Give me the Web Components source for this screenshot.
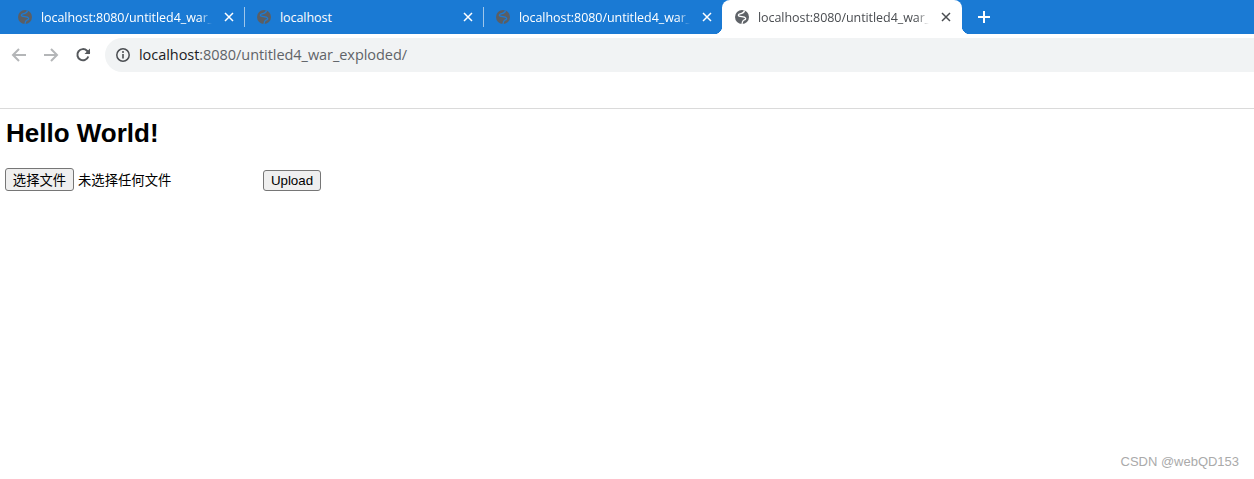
<!DOCTYPE html>
<html lang="zh">
<head>
<meta charset="utf-8">
<title>localhost</title>
<style>
html,body{margin:0;padding:0;background:#fff;height:479px;overflow:hidden}
body{display:flex;flex-direction:column;position:relative;font-family:"Liberation Sans",Arial,sans-serif}
</style>
</head>
<body>
<tab-strip>
  <browser-tab label="localhost:8080/untitled4_war_"></browser-tab>
  <browser-tab label="localhost" plain></browser-tab>
  <browser-tab label="localhost:8080/untitled4_war_"></browser-tab>
  <browser-tab label="localhost:8080/untitled4_war_" active></browser-tab>
</tab-strip>
<nav-bar host="localhost" rest=":8080/untitled4_war_exploded/"></nav-bar>
<bookmark-bar></bookmark-bar>
<upload-page></upload-page>
<water-mark>CSDN @webQD153</water-mark>

<script>
const GLOBE = `<svg viewBox="0 0 16 16" width="16" height="16" aria-hidden="true"><mask id="g" maskUnits="userSpaceOnUse" x="0" y="0" width="16" height="16"><circle cx="8" cy="8" r="7" fill="#fff"/><path d="M10.500 1.500C10 4 8 4.500 6 4.800 4.300 5.100 3.800 6.600 5.200 7.200 7 8 10.500 7.400 11.500 9 12.300 10.300 10.300 10.800 9.300 11.500 8.500 12.100 8.200 13.500 8 15" fill="none" stroke="#000" stroke-width="1.300"/></mask><rect width="16" height="16" fill="currentColor" mask="url(#g)"/></svg>`;

class TabStrip extends HTMLElement{
  constructor(){super();this.attachShadow({mode:'open'}).innerHTML=`
  <style>
  :host{display:flex;align-items:flex-end;height:34px;background:#1a7ad4;padding-left:6px;box-sizing:border-box;flex:none}
  .plus{width:43px;height:34px;display:flex;align-items:center;justify-content:center;color:#fff}
  </style>
  <slot></slot>
  <div class="plus"><svg width="14" height="14" viewBox="0 0 14 14"><path d="M7 1v12M1 7h12" stroke="currentColor" stroke-width="2" fill="none"/></svg></div>`;}
}
class BrowserTab extends HTMLElement{
  connectedCallback(){
    if(this.shadowRoot)return;
    this.attachShadow({mode:'open'}).innerHTML=`
    <style>
    :host{display:flex;align-items:center;width:239px;height:34px;box-sizing:border-box;padding:0 8px 0 11px;position:relative;color:#fff;font:12.500px/18px "Open Sans","Noto Sans",sans-serif;letter-spacing:-.06px}
    :host([active]){background:#fff;color:#4a4d51;border-radius:8px 8px 0 0;width:240px;padding-left:12px;margin-left:-1px}
    :host(:not([active]))::after{content:"";position:absolute;right:0;top:7px;height:20px;width:1px;background:#9fc6ea}
    .ic{flex:none;width:16px;height:16px;color:#5a5e64;margin-right:8px}
    :host([active]) .ic{color:#5f6368}
    .t{flex:1;min-width:0;padding-top:1px;white-space:nowrap;-webkit-mask-image:linear-gradient(90deg,#000 calc(100% - 12px),transparent 100%);mask-image:linear-gradient(90deg,#000 calc(100% - 12px),transparent 100%)}
    :host([plain]) .t{-webkit-mask-image:none;mask-image:none}
    .x{flex:none;width:16px;height:16px;margin-left:9px;display:flex;align-items:center;justify-content:center}
    .cap{display:none;position:absolute;bottom:0;width:8px;height:8px;background:radial-gradient(circle at var(--c),#1a7ad4 8px,#fff 8.500px)}
    :host([active]) .cap{display:block}
    .l{left:-8px;--c:0 0}.r{right:-8px;--c:100% 0}
    </style>
    <span class="ic">${GLOBE}</span>
    <span class="t">${this.getAttribute('label')}</span>
    <span class="x"><svg width="10" height="10" viewBox="0 0 10 10"><path d="M1 1l8 8M9 1l-8 8" stroke="currentColor" stroke-width="1.500" fill="none"/></svg></span>
    <i class="cap l"></i><i class="cap r"></i>`;
  }
}
class NavBar extends HTMLElement{
  connectedCallback(){
    if(this.shadowRoot)return;
    this.attachShadow({mode:'open'}).innerHTML=`
    <style>
    :host{display:flex;align-items:center;height:42px;box-sizing:border-box;padding:4px 0 4px 7px;background:#fff;flex:none}
    .b{flex:none;width:24px;height:24px;margin-right:8px;display:flex;align-items:center;justify-content:center;color:#b4b6b8}
    .b.on{color:#55585c;margin-right:10px}
    .omni{flex:1;height:34px;background:#f1f3f4;border-radius:17px 0 0 17px;display:flex;align-items:center;padding-left:10px;font:14.500px/20px "Open Sans","Noto Sans",sans-serif;letter-spacing:-.05px;color:#5f6368}
    .omni svg{flex:none;margin-right:8px;color:#4a4d51}
    .h{color:#202124}
    </style>
    <div class="b"><svg width="16" height="16" viewBox="0 0 16 16"><path d="M15 8H2M8 2L2 8l6 6" stroke="currentColor" stroke-width="2" fill="none"/></svg></div>
    <div class="b"><svg width="16" height="16" viewBox="0 0 16 16"><path d="M1 8h13M8 2l6 6-6 6" stroke="currentColor" stroke-width="2" fill="none"/></svg></div>
    <div class="b on"><svg width="16" height="16" viewBox="0 0 16 16"><path d="M13.300 9.500A5.600 5.600 0 1 1 12 3.800L14.500 6.500" stroke="currentColor" stroke-width="2" fill="none"/><path d="M15 1.500V7H9.500z" fill="currentColor"/></svg></div>
    <div class="omni"><svg width="16" height="16" viewBox="0 0 16 16"><circle cx="8" cy="8" r="6.200" stroke="currentColor" stroke-width="1.500" fill="none"/><path d="M8 7v4.500" stroke="currentColor" stroke-width="1.600"/><circle cx="8" cy="4.900" r="1" fill="currentColor"/></svg><span><span class="h">${this.getAttribute('host')}</span>${this.getAttribute('rest')}</span></div>`;
  }
}
class BookmarkBar extends HTMLElement{
  constructor(){super();this.attachShadow({mode:'open'}).innerHTML=`<style>:host{display:block;height:33px;box-sizing:border-box;border-bottom:1px solid #dadada;flex:none}</style>`;}
}
class FilePicker extends HTMLElement{
  constructor(){super();this.attachShadow({mode:'open'}).innerHTML=`
  <style>
  :host{display:inline-flex;align-items:center;width:258px;flex:none;font:13.333px "Noto Sans CJK SC",sans-serif}
  button{font:inherit;height:23px;width:69px;padding:0;margin-right:4px;background:#efefef;color:#000;border:1px solid #767676;border-radius:3px;box-sizing:border-box}
  </style>
  <button type="button">选择文件</button><span>未选择任何文件</span>`;}
}
class UploadPage extends HTMLElement{
  constructor(){super();this.attachShadow({mode:'open'}).innerHTML=`
  <style>
  :host{display:block;padding:0 5px;color:#000;font-family:"Liberation Sans",Arial,sans-serif}
  h1{margin:9px 0 0 1px;font-size:26px;line-height:30px;font-weight:700}
  .row{display:flex;align-items:flex-end;margin-top:20px}
  .up{height:21px;width:58px;padding:0;background:#efefef;color:#000;border:1px solid #767676;border-radius:3px;box-sizing:border-box;font:13.333px "Liberation Sans",Arial,sans-serif}
  </style>
  <h1>Hello World!</h1>
  <div class="row"><file-picker></file-picker><button class="up" type="button">Upload</button></div>`;}
}
class WaterMark extends HTMLElement{
  constructor(){super();this.attachShadow({mode:'open'}).innerHTML=`
  <style>:host{position:absolute;right:15px;top:454px;font:13px/16px "Liberation Sans",Arial,sans-serif;letter-spacing:-.02px;color:#aaa}</style><slot></slot>`;}
}
customElements.define('tab-strip',TabStrip);
customElements.define('browser-tab',BrowserTab);
customElements.define('nav-bar',NavBar);
customElements.define('bookmark-bar',BookmarkBar);
customElements.define('file-picker',FilePicker);
customElements.define('upload-page',UploadPage);
customElements.define('water-mark',WaterMark);
</script>
</body>
</html>
